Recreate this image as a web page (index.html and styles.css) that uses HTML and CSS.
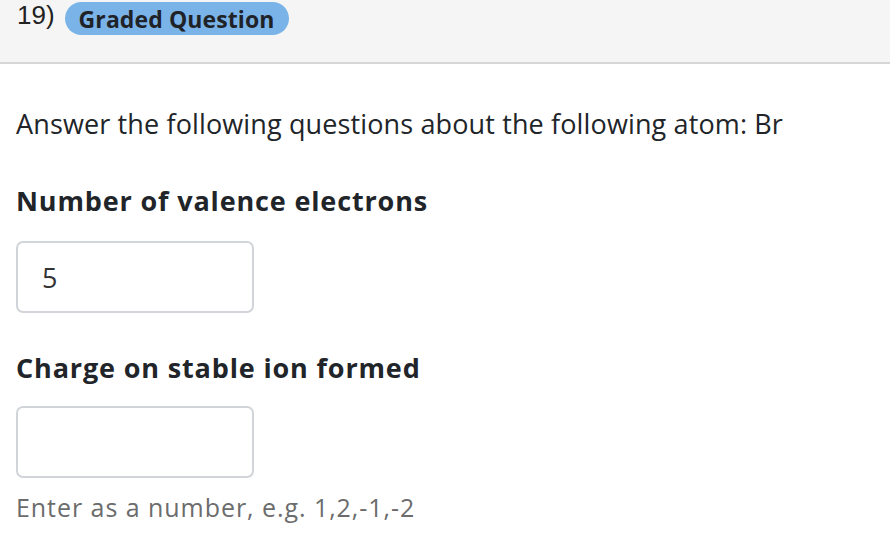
FILE: index.html
```html
<!DOCTYPE html>
<html>
<head>
<meta charset="utf-8">
<link rel="stylesheet" href="styles.css">
</head>
<body>
<div class="header">
  <span class="qnum">19)</span>
  <span class="badge">Graded Question</span>
</div>
<div class="content">
  <p class="prompt">Answer the following questions about the following atom: Br</p>
  <h3 class="label">Number of valence electrons</h3>
  <div class="field"><span class="value">5</span></div>
  <h3 class="label second">Charge on stable ion formed</h3>
  <div class="field"></div>
  <p class="hint">Enter as a number, e.g. 1,2,-1,-2</p>
</div>
</body>
</html>
```
FILE: styles.css
```css
html, body {
  margin: 0;
  padding: 0;
  background: #ffffff;
}
body {
  font-family: "Open Sans", "Lato", sans-serif;
  color: #212529;
  width: 890px;
  height: 538px;
  overflow: hidden;
}
.header {
  background: #f5f5f5;
  height: 62px;
  border-bottom: 2px solid #d6d6d6;
  display: flex;
  align-items: flex-start;
  padding-left: 17px;
  gap: 10px;
}
.qnum {
  font-family: "Liberation Sans", Arial, sans-serif;
  font-size: 26px;
  line-height: 30px;
  color: #222;
}
.badge {
  margin-top: 2px;
  background: #7ab3e8;
  border-radius: 17px;
  height: 33px;
  padding: 0 14px;
  display: flex;
  align-items: center;
  font-weight: 700;
  font-size: 23px;
  letter-spacing: 0.1px;
  color: #1f2328;
}
.content {
  padding: 0 16px;
}
.prompt {
  margin: 42px 0 0 0;
  font-size: 27px;
  line-height: 36px;
  letter-spacing: 0.13px;
}
.label {
  margin: 41px 0 0 0;
  font-size: 27px;
  font-weight: 700;
  line-height: 36px;
  letter-spacing: 0.85px;
}
.label.second {
  margin-top: 37px;
}
.field {
  margin-top: 22px;
  width: 238px;
  height: 72px;
  border: 2px solid #d1d5da;
  border-radius: 7px;
  display: flex;
  align-items: center;
  padding-left: 24px;
  box-sizing: border-box;
}
.label.second + .field {
  margin-top: 20px;
}
.value {
  font-size: 27px;
  color: #333;
}
.hint {
  margin: 13px 0 0 0;
  font-size: 25px;
  line-height: 32px;
  letter-spacing: 0.95px;
  color: #6c6c6c;
}
```
